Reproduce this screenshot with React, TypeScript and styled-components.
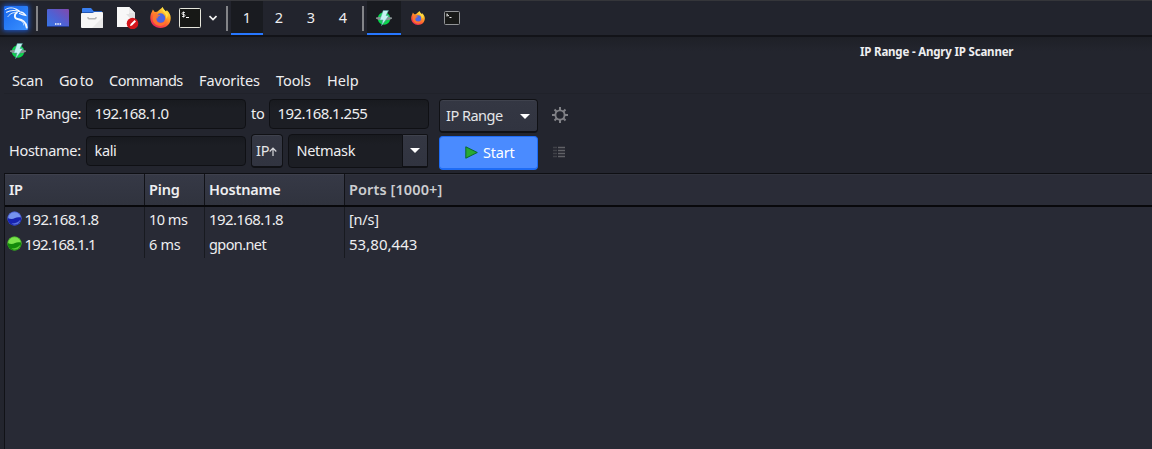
import React from "react";
import styled, { createGlobalStyle } from "styled-components";

const Global = createGlobalStyle`
  * { box-sizing: border-box; }
  html, body { margin: 0; background: #23252e; overflow: hidden; }
  body { font-family: "Noto Sans", sans-serif; font-size: 14.5px; color: #eeeef0; }
  svg { display: block; flex: none; }
`;

const Screen = styled.div`
  width: 1152px;
  height: 449px;
  overflow: hidden;
  display: flex;
  flex-direction: column;
  background: #23252e;
`;

const Text = styled.span<{ $ls?: number; $num?: boolean }>`
  display: block;
  white-space: pre;
  height: 20px;
  line-height: 18px;
  font-size: ${(p) => (p.$num ? "15px" : "inherit")};
  letter-spacing: ${(p) => p.$ls ?? 0}px;
`;

/* ---------- desktop panel ---------- */

const Panel = styled.header`
  height: 37px;
  flex: none;
  display: flex;
  align-items: flex-start;
  background: #22242d;
  border-top: 1px solid #35363a;
  border-bottom: 2px solid #121318;
`;

const Slot = styled.div<{ $w: number; $pl?: number; $pt?: number }>`
  width: ${(p) => p.$w}px;
  height: 34px;
  flex: none;
  padding: ${(p) => p.$pt ?? 0}px 0 0 ${(p) => p.$pl ?? 0}px;
`;

const KaliTile = styled.div`
  width: 24px;
  height: 24px;
  background: linear-gradient(135deg, #1767ee, #3b91ff);
  box-shadow: 0 0 5px 1px #1a58d0;
  border-radius: 1px;
`;

const Divider = styled.i`
  width: 2px;
  height: 25px;
  margin-top: 5px;
  flex: none;
  background: #838488;
`;

const Workspaces = styled.nav`
  display: flex;
  margin-left: 3px;
  margin-right: 3px;
`;

const Tab = styled.div<{ $w: number; $active?: boolean }>`
  width: ${(p) => p.$w}px;
  height: 34px;
  flex: none;
  display: flex;
  align-items: center;
  justify-content: center;
  padding-top: 2px;
  background: ${(p) => (p.$active ? "#191b20" : "transparent")};
  border-bottom: 2px solid ${(p) => (p.$active ? "#2777ff" : "transparent")};
`;

/* ---------- application window ---------- */

const TitleBar = styled.div`
  height: 31px;
  flex: none;
  display: flex;
  padding: 6px 0 0 10px;
  background: linear-gradient(#1e2027, #23252e 45%);
`;

const Title = styled.h1`
  margin: 0 0 0 834px;
  font-size: 11.5px;
  font-weight: 700;
  line-height: 18px;
  letter-spacing: -0.19px;
  white-space: nowrap;
`;

const MenuBar = styled.nav`
  height: 26px;
  flex: none;
  display: flex;
  margin-left: 4px;
  padding: 3px 0 0 8px;
  border-bottom: 1px solid #20222a;
`;

const MenuItem = styled(Text)<{ $w: number; $ws?: number }>`
  width: ${(p) => p.$w}px;
  flex: none;
  word-spacing: ${(p) => p.$ws ?? 0}px;
`;

const Controls = styled.section`
  height: 79px;
  flex: none;
  display: flex;
  padding-top: 5px;
`;

const Fields = styled.div`
  width: 439px;
  display: flex;
  flex-direction: column;
  gap: 5px;
`;

const FieldRow = styled.div<{ $h: number }>`
  height: ${(p) => p.$h}px;
  display: flex;
  align-items: center;
`;

const FieldLabel = styled(Text)<{ $w: number; $pl: number }>`
  width: ${(p) => p.$w}px;
  padding-left: ${(p) => p.$pl}px;
  flex: none;
`;

const Input = styled.div<{ $w: number; $h?: number; $flat?: boolean }>`
  width: ${(p) => p.$w}px;
  height: ${(p) => p.$h ?? 30}px;
  flex: none;
  display: flex;
  align-items: center;
  padding: 0 8px 0 7.5px;
  background: linear-gradient(#181a1f, #1c1e24 30%);
  border: 1px solid #0f1014;
  border-radius: ${(p) => (p.$flat ? "4px 0 0 4px" : "4px")};
`;

const Button = styled.button<{ $w: number; $primary?: boolean; $flat?: boolean; $pl?: number }>`
  width: ${(p) => p.$w}px;
  height: 34px;
  flex: none;
  display: flex;
  align-items: center;
  padding: 0 0 0 ${(p) => p.$pl ?? 0}px;
  font: inherit;
  color: ${(p) => (p.$primary ? "#ffffff" : "#e4e5e8")};
  background: ${(p) => (p.$primary ? "#4a8bff" : "linear-gradient(#343743, #313440)")};
  border: 1px solid ${(p) => (p.$primary ? "#1e6cf5" : "#101115")};
  border-bottom-width: 2px;
  border-left-width: ${(p) => (p.$flat ? 0 : 1)}px;
  border-radius: ${(p) => (p.$flat ? "0 2px 2px 0" : "4px")};
  box-shadow: ${(p) => (p.$primary ? "none" : "inset 0 1px #3f424d")};
`;

const IpButtonSlot = styled.div`
  width: 42px;
  padding-left: 5px;
  flex: none;
`;

const Actions = styled.div`
  width: 99px;
  display: flex;
  flex-direction: column;
  gap: 3px;
`;

const CaretSlot = styled.span`
  display: flex;
  margin-left: auto;
  margin-right: 7px;
  padding-top: 1px;
`;

const StartLabel = styled(Text)`
  margin-left: 5px;
`;

const Tools = styled.div`
  padding: 8px 0 0 14px;
  display: flex;
  flex-direction: column;
  gap: 23px;
`;

/* ---------- result list ---------- */

const Table = styled.section`
  flex: 1;
  margin-left: 4px;
  border-left: 1px solid #111217;
  border-top: 1px solid #0e0f13;
  background: #282a35;
`;

const HeadRow = styled.div`
  display: flex;
  height: 33px;
  border-bottom: 2px solid #08080b;
  font-weight: 600;
`;

const HeadCell = styled.div<{ $w?: number }>`
  ${(p) => (p.$w ? `width: ${p.$w}px; flex: none; border-right: 1px solid #111217;` : "flex: 1;")}
  padding: 6px 0 0 4px;
  color: ${(p) => (p.$w ? "#eeeef0" : "#cccdd0")};
  background: ${(p) => (p.$w ? "linear-gradient(#363946, #30333e)" : "#2a2c37")};
  box-shadow: inset 0 1px ${(p) => (p.$w ? "#3f414d" : "#30323c")};
`;

const Row = styled.div`
  display: flex;
  height: 25px;
  &:last-child { height: 26px; }
`;

const Cell = styled.div<{ $w?: number; $icon?: boolean }>`
  ${(p) => (p.$w ? `width: ${p.$w}px; flex: none; border-right: 1px solid #181a20;` : "flex: 1;")}
  display: flex;
  gap: 2.5px;
  padding: 3px 0 0 ${(p) => (p.$icon ? 2 : 4)}px;
`;

/* ---------- icons ---------- */

const Kali = () => (
  <KaliTile>
    <svg width="24" height="24" viewBox="0 0 24 24" fill="none" stroke="#f4f9ff" strokeLinecap="round">
      <path d="M1.500 3.500C5 1.200 9 1.500 12.500 3.200" strokeWidth=".9" />
      <path d="M2.500 6.200C7 3.700 10.500 3.900 15 5.500" strokeWidth="1.100" />
      <path d="M4 10.500C6.500 7 9.500 6.300 12 6.700" strokeWidth=".9" />
      <path d="M12 3.200C13.500 4 15 4.600 16 5.800C18.500 6 20 6.800 21.500 9.200L18.500 8.600L15.500 7.500" strokeWidth="1.300" />
      <path d="M13 6.500C10 8.500 10 12.300 13.600 13C18.500 14 22 15.500 22.700 21.500" strokeWidth="1.900" />
      <path d="M16 14.300C18.500 15.500 20 17 19.800 19" strokeWidth=".7" />
    </svg>
  </KaliTile>
);

const Desktop = () => (
  <svg width="22" height="18" viewBox="0 0 22 18">
    <defs>
      <linearGradient id="desk" x1="0" y1="1" x2="1" y2="0">
        <stop stopColor="#3577e6" /><stop offset=".5" stopColor="#5160d2" /><stop offset="1" stopColor="#8248ac" />
      </linearGradient>
    </defs>
    <rect width="22" height="18" rx="1" fill="url(#desk)" />
    <path d="M0 17.5h22" stroke="#263b8c" />
    <path d="M8 15h1.5M10.3 15h1.5M12.6 15h1.5" stroke="#fff" strokeWidth="1.600" />
  </svg>
);

const Folder = () => (
  <svg width="22" height="20" viewBox="0 0 22 20">
    <path d="M1 1q0-1 1-1h8l2.500 3H20q1 0 1 1v3H1z" fill="#3a7ff0" />
    <path d="M1 6V4h11l1.500-1H21v3z" fill="#2359b8" />
    <path d="M0 6q0-1 1-1h10.500l2-1H21q1 0 1 1v14q0 1-1 1H1q-1 0-1-1z" fill="#f7f7f7" />
    <path d="M22 9v10q0 1-1 1H11z" fill="#e9e9e9" />
    <path d="M7 9v.5q0 1.200 1 1.200h6q1 0 1-1.200V9" fill="none" stroke="#b6b6b6" strokeWidth="1.400" />
  </svg>
);

const Editor = () => (
  <svg width="22" height="22" viewBox="0 0 22 22">
    <path d="M0 0h12l6 6v14H0z" fill="#f8f8f8" />
    <path d="M12 0l6 6v10l-9-9h3z" fill="#e2e2e2" />
    <path d="M12 0v6h6z" fill="#ececec" />
    <circle cx="15.500" cy="16.500" r="5.800" fill="#d3151b" />
    <path d="M13 19l.6-2 4-4 1.400 1.400-4 4z" fill="#fff" />
  </svg>
);

const Firefox = ({ size, id }: { size: number; id: string }) => (
  <svg width={size} height={size} viewBox="0 0 22 22">
    <defs>
      <linearGradient id={id} x1=".85" y1=".05" x2=".25" y2="1">
        <stop stopColor="#fff04a" /><stop offset=".35" stopColor="#ffaa24" />
        <stop offset=".65" stopColor="#ff5a35" /><stop offset="1" stopColor="#e5215e" />
      </linearGradient>
    </defs>
    <path d="M2 5L3 2.500l2 2.700L7.500 5l6-5c-.2 2 1.500 3 3 4.700l1.200-1.200c2.700 2.500 4 5 4 8C21.700 18 17 22 11 22S.3 17.500.3 11.500C.3 9 1 6.700 2 5z" fill={`url(#${id})`} />
    <circle cx="11" cy="11.600" r="5" fill="#4b66e3" />
    <path d="M7.500 5c-1 2 .3 3 3.500 3.500-.2 1-2 1.400-3 2 .5 1.500-.5 1.800-1 1-1 3 1.500 5.300 4.500 5.300 3 0 5.200-2.300 5.200-5 1.500 5-2 8-6 8-4.500 0-8-3.500-8-7.800 0-3 1.500-5.700 4.800-7z" fill="#ff7a2c" opacity=".85" />
    <path d="M13.500 0c-1.500 3.500.5 4.500 2 6.500 1.600 2 1.800 4 1.200 6 3-3 2.600-6-.2-7.800-1.500-1.700-3-2.700-3-4.700z" fill="#ffdf46" />
  </svg>
);

const Terminal = () => (
  <svg width="22" height="20" viewBox="0 0 22 20">
    <rect x=".5" y=".5" width="21" height="19" rx=".8" fill="#171816" stroke="#e6e6dc" />
    <path d="M6 4.500H4q-1 0-1 1t1 1h1q1 0 1 1t-1 1H3M4.500 3.500v6" fill="none" stroke="#fff" strokeWidth=".8" />
    <path d="M7 9.500h3" stroke="#fff" />
  </svg>
);

const MiniTerminal = () => (
  <svg width="16" height="14" viewBox="0 0 16 14">
    <rect x=".5" y=".5" width="15" height="13" rx="1" fill="#191a19" stroke="#929497" />
    <path d="M3 2.500v3M3 3.500l2 1.500M5.500 6.500h2" fill="none" stroke="#fff" strokeWidth=".9" />
  </svg>
);

const Chevron = () => (
  <svg width="8" height="6" viewBox="0 0 8 6">
    <path d="M.5 1L4 4.500 7.500 1" fill="none" stroke="#f4f4f4" strokeWidth="1.700" />
  </svg>
);

const Bolt = () => (
  <svg width="16" height="16" viewBox="0 0 16 16">
    <circle cx="8" cy="8.500" r="6.200" fill="#07d94c" />
    <circle cx="8" cy="8.500" r="4.300" fill="#26b85a" />
    <path d="M0 7.500L3 7h10l3 .5v1.300L13 10H3L0 8.800z" fill="#8a9395" />
    <path d="M7.200.5h5.300L10 5.500h3L5.500 15.700 7 10H3.800z" fill="#c3f3f2" stroke="#4c9e9b" strokeWidth=".5" />
  </svg>
);

const Caret = () => (
  <svg width="10" height="5" viewBox="0 0 10 5"><path d="M0 0h10L5 5z" fill="#fff" /></svg>
);

const UpArrow = () => (
  <svg width="8" height="10" viewBox="0 0 8 10">
    <path d="M4 10V2.200M.7 5.500L4 2.200l3.300 3.300" fill="none" stroke="#d8d9dc" strokeWidth="1.200" />
  </svg>
);

const Play = () => (
  <svg width="13" height="13" viewBox="0 0 13 13">
    <path d="M.8.8v11.400L12.300 6.500z" fill="#28aa33" stroke="#0b682f" />
  </svg>
);

const Gear = () => (
  <svg width="16" height="16" viewBox="0 0 16 16" fill="none" stroke="#808186">
    <circle cx="8" cy="8" r="4.600" strokeWidth="1.900" />
    <path d="M8 0v3M8 13v3M0 8h3M13 8h3M2.500 2.500l2 2M11.500 11.500l2 2M2.500 13.500l2-2M11.500 4.500l2-2" strokeWidth="2" />
  </svg>
);

const ListIcon = () => (
  <svg width="16" height="12" viewBox="0 0 16 12">
    <path d="M1 1.500h4M1 4.500h4M1 7.500h4M1 10.500h4" stroke="#404248" strokeWidth="1.300" />
    <path d="M6 1.500h7M6 4.500h7M6 7.500h7M6 10.500h7" stroke="#606166" strokeWidth="1.300" />
  </svg>
);

const Orb = ({ dark, light }: { dark: string; light: string }) => (
  <svg width="15" height="16" viewBox="0 -1 15 16">
    <circle cx="7.500" cy="7.500" r="7" fill={light} />
    <path d="M.8 7c2.500 1.200 5 1.300 7.200 0 1.700-.8 3.500-1 6-.5.8 4.500-2.500 7.800-6.500 7.800-4 0-7.300-3.300-6.700-7.300z" fill={dark} />
    <path d="M4.500 12.500c4 0 7-1.500 9-4-.5 3.500-3 5.300-5.500 5.300-1.500 0-2.800-.5-3.500-1.300z" fill={light} opacity=".7" />
    <circle cx="7.500" cy="7.500" r="6.700" fill="none" stroke={dark} strokeWidth=".7" opacity=".6" />
  </svg>
);

const menu: [string, number, number, number?][] = [
  ["Scan", 47, -0.28], ["Go to", 50, -0.25, -1.5], ["Commands", 90, -0.53],
  ["Favorites", 77, -0.12], ["Tools", 51, -0.08], ["Help", 40, 0],
];

export default function App() {
  return (
    <Screen>
      <Global />
      <Panel>
        <Slot $w={36} $pl={4} $pt={5}><Kali /></Slot>
        <Divider />
        <Slot $w={43} $pl={9} $pt={8}><Desktop /></Slot>
        <Slot $w={36} $pt={7}><Folder /></Slot>
        <Slot $w={32} $pt={6}><Editor /></Slot>
        <Slot $w={30} $pt={6} $pl={1}><Firefox size={21} id="foxLarge" /></Slot>
        <Slot $w={30} $pt={7}><Terminal /></Slot>
        <Slot $w={17} $pt={14}><Chevron /></Slot>
        <Divider />
        <Workspaces>
          {["1", "2", "3", "4"].map((n) => (
            <Tab key={n} $w={32} $active={n === "1"}><Text>{n}</Text></Tab>
          ))}
        </Workspaces>
        <Divider />
        <Slot $w={3} />
        <Tab $w={34} $active><Bolt /></Tab>
        <Tab $w={34}><Firefox size={14} id="foxSmall" /></Tab>
        <Tab $w={34}><MiniTerminal /></Tab>
      </Panel>

      <TitleBar>
        <Bolt />
        <Title>IP Range - Angry IP Scanner</Title>
      </TitleBar>
      <MenuBar>
        {menu.map(([label, w, ls, ws]) => (
          <MenuItem key={label} $w={w} $ls={ls} $ws={ws}>{label}</MenuItem>
        ))}
      </MenuBar>

      <Controls>
        <Fields>
          <FieldRow $h={30}>
            <FieldLabel $w={86} $pl={20} $ls={-0.4}>IP Range:</FieldLabel>
            <Input $w={160}><Text $num $ls={-0.62}>192.168.1.0</Text></Input>
            <FieldLabel $w={23} $pl={5} $ls={-0.2}>to</FieldLabel>
            <Input $w={160}><Text $num $ls={-0.62}>192.168.1.255</Text></Input>
          </FieldRow>
          <FieldRow $h={34}>
            <FieldLabel $w={86} $pl={9} $ls={-0.29}>Hostname:</FieldLabel>
            <Input $w={160}><Text $ls={-0.35}>kali</Text></Input>
            <IpButtonSlot>
              <Button $w={32} $pl={4}><Text $ls={-0.2}>IP</Text><UpArrow /></Button>
            </IpButtonSlot>
            <Input $w={115} $h={34} $flat><Text $ls={-0.3}>Netmask</Text></Input>
            <Button $w={25} $pl={7} $flat><Caret /></Button>
          </FieldRow>
        </Fields>
        <Actions>
          <Button $w={99} $pl={6}><Text $ls={-0.5}>IP Range</Text><CaretSlot><Caret /></CaretSlot></Button>
          <Button $w={99} $pl={25} $primary><Play /><StartLabel $ls={-0.22}>Start</StartLabel></Button>
        </Actions>
        <Tools><Gear /><ListIcon /></Tools>
      </Controls>

      <Table>
        <HeadRow>
          <HeadCell $w={140}><Text $ls={-0.3}>IP</Text></HeadCell>
          <HeadCell $w={60}><Text $ls={-0.15}>Ping</Text></HeadCell>
          <HeadCell $w={140}><Text $ls={-0.2}>Hostname</Text></HeadCell>
          <HeadCell><Text $ls={0.1}>Ports [1000+]</Text></HeadCell>
        </HeadRow>
        <Row>
          <Cell $w={140} $icon><Orb dark="#1722b0" light="#7593ee" /><Text $num $ls={-0.6}>192.168.1.8</Text></Cell>
          <Cell $w={60}><Text $ls={-0.5}>10 ms</Text></Cell>
          <Cell $w={140}><Text $num $ls={-0.6}>192.168.1.8</Text></Cell>
          <Cell><Text $ls={-0.2}>[n/s]</Text></Cell>
        </Row>
        <Row>
          <Cell $w={140} $icon><Orb dark="#138a0b" light="#7be34c" /><Text $num $ls={-0.85}>192.168.1.1</Text></Cell>
          <Cell $w={60}><Text $ls={-0.3}>6 ms</Text></Cell>
          <Cell $w={140}><Text $ls={-0.6}>gpon.net</Text></Cell>
          <Cell><Text $num $ls={0.03}>53,80,443</Text></Cell>
        </Row>
      </Table>
    </Screen>
  );
}
